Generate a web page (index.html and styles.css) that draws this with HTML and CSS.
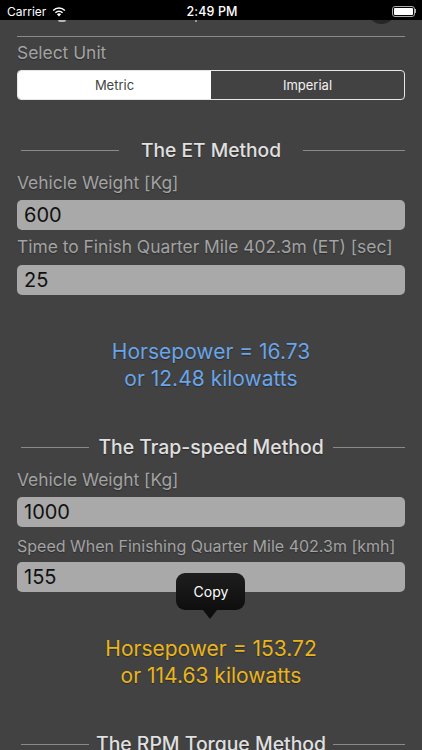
FILE: index.html
```html
<!DOCTYPE html>
<html lang="en">
<head>
<meta charset="utf-8">
<title>Horsepower</title>
<link rel="stylesheet" href="styles.css">
</head>
<body>
<div class="screen">
  <header class="status">
    <div class="status-left"><span>Carrier</span>
      <svg class="wifi" viewBox="0 0 16 12" width="14" height="11"><path d="M8 11.6 5.6 9.2a3.4 3.4 0 0 1 4.8 0Z" fill="#fff"/><path d="M3.9 7.4a5.8 5.8 0 0 1 8.2 0" fill="none" stroke="#fff" stroke-width="1.7"/><path d="M1.3 4.8a9.5 9.5 0 0 1 13.4 0" fill="none" stroke="#fff" stroke-width="1.7"/></svg>
    </div>
    <div class="status-time">2:49 PM</div>
    <div class="status-right"><div class="battery"><div class="battery-fill"></div></div><div class="battery-cap"></div></div>
  </header>
  <div class="peek peek-circle"></div>
  <div class="peek peek-left"></div>
  <div class="peek peek-mid"></div>
  <main class="content">
    <div class="rule"></div>
    <div class="label unit-label">Select Unit</div>
    <div class="segmented"><div class="seg seg-on">Metric</div><div class="seg">Imperial</div></div>

    <h2 class="heading et-heading"><span>The ET Method</span></h2>
    <div class="label">Vehicle Weight [Kg]</div>
    <div class="field">600</div>
    <div class="label time-label">Time to Finish Quarter Mile 402.3m (ET) [sec]</div>
    <div class="field">25</div>
    <div class="result blue">Horsepower = 16.73<br>or 12.48 kilowatts</div>

    <h2 class="heading trap-heading"><span>The Trap-speed Method</span></h2>
    <div class="label">Vehicle Weight [Kg]</div>
    <div class="field">1000</div>
    <div class="label small">Speed When Finishing Quarter Mile 402.3m [kmh]</div>
    <div class="field copy-host">155
      <div class="copy">Copy</div>
    </div>
    <div class="result yellow">Horsepower = 153.72<br>or 114.63 kilowatts</div>

    <h2 class="heading rpm-heading"><span>The RPM Torque Method</span></h2>
  </main>
</div>
</body>
</html>
```
FILE: styles.css
```css
* { box-sizing: border-box; }
html, body { margin: 0; padding: 0; }
body { font-family: Inter, "Liberation Sans", sans-serif; background: #424242; }
.screen { position: relative; width: 422px; height: 750px; overflow: hidden; display: flex; flex-direction: column; background: #424242; }
.status { flex: none; height: 20px; background: #000; color: #fff; display: flex; align-items: center; justify-content: space-between; padding: 2px 6px 0 7px; position: relative; z-index: 1; font-size: 12px; }
.status-left { display: flex; align-items: center; gap: 6px; }
.status-time { position: absolute; left: 2px; right: 0; top: 4px; text-align: center; font-weight: 500; font-size: 12.5px; line-height: 15px; letter-spacing: 0.1px; }
.status-right { display: flex; align-items: center; }
.battery { width: 23px; height: 11px; border: 1px solid #aaa; border-radius: 3px; padding: 1px; }
.battery-fill { height: 100%; background: #fff; border-radius: 1px; }
.battery-cap { width: 1.5px; height: 4px; background: #aaa; }
.peek { position: absolute; }
.peek-circle { left: 367px; top: -5px; width: 29px; height: 29px; border-radius: 50%; background: #262626; }
.peek-left { left: 58px; top: 20px; width: 8px; height: 2px; background: #b5b5b5; border-radius: 0 0 3px 3px; }
.peek-mid { left: 195px; top: 20px; width: 2px; height: 2px; background: #999; }
.content { flex: 1; padding: 16px 17px 0; }
.rule { height: 1px; background: #8a8a8a; }
.label { color: #a3a3a3; font-size: 17.4px; line-height: 20px; text-shadow: 0 1px 1px rgba(0,0,0,.35); white-space: nowrap; }
.unit-label { margin-top: 6px; margin-bottom: 7px; }
.small { font-size: 16px; margin-top: 9px; margin-bottom: -1px; }
.time-label { margin-bottom: 8px; }
.segmented { display: flex; height: 30px; border: 1px solid #e6e6e6; border-radius: 4px; overflow: hidden; }
.seg { flex: 1; display: flex; align-items: center; justify-content: center; color: #f2f2f2; font-size: 13px; }
.seg-on { background: #fff; color: #444; }
.heading { margin: 0; display: flex; align-items: center; color: #e0e0e0; font-size: 19.4px; line-height: 24px; font-weight: 500; white-space: nowrap; text-shadow: 0 1px 1px rgba(0,0,0,.4); }
.heading::before, .heading::after { content: ""; height: 1px; background: #8a8a8a; }
.heading::before { flex: 1 1 0; margin-left: 4px; }
.heading::after { flex: 1 1 4px; }
.et-heading { margin-top: 38px; margin-bottom: 11px; gap: 22px; font-size: 19.2px; }
.trap-heading { margin-top: 43px; margin-bottom: 11px; gap: 9px; }
.rpm-heading { margin-top: 43px; gap: 7px; }
.field { height: 30px; margin-top: 7px; margin-bottom: 7px; background: #a9a9a9; border-radius: 5px; padding-left: 7px; color: #111; font-size: 20px; line-height: 30px; }
.result { text-align: center; font-size: 21px; line-height: 27px; margin-top: 43px; text-shadow: 0 1px 1px rgba(0,0,0,.35); }
.blue { color: #6aa5e8; }
.yellow { color: #eab51c; }
.copy-host { position: relative; }
.copy { position: absolute; left: 159px; top: 11px; width: 69px; height: 37px; padding-left: 1px; background: linear-gradient(#1e1e1e, #0e0e0e); border-radius: 9px; color: #fff; font-size: 14px; line-height: 37px; text-align: center; }
.copy::after { content: ""; position: absolute; left: 27px; top: 37px; border: 7px solid transparent; border-top: 9px solid #0e0e0e; border-bottom: 0; }
```
